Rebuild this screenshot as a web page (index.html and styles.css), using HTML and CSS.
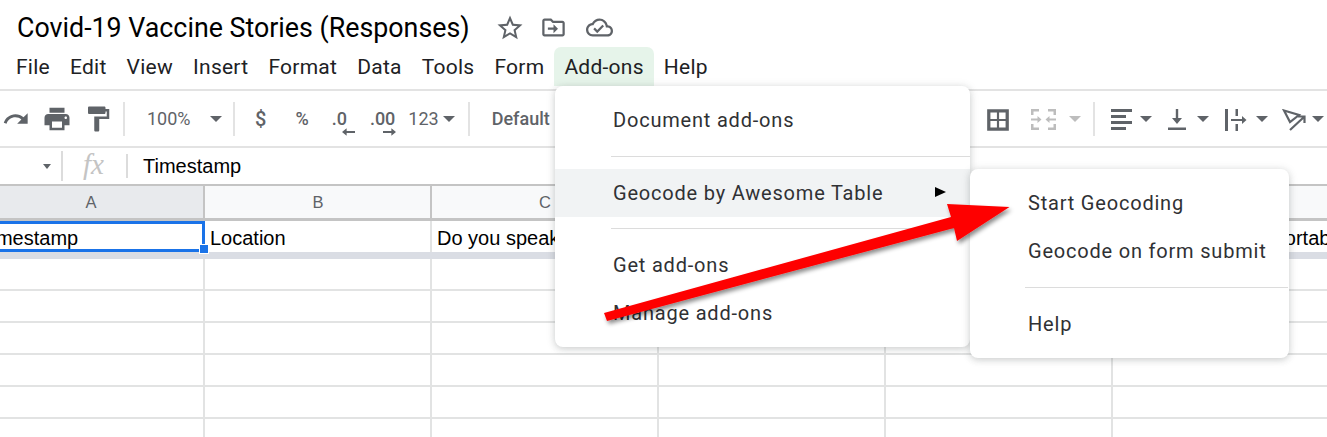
FILE: index.html
```html
<!DOCTYPE html>
<html lang="en">
<head>
<meta charset="utf-8">
<title>Covid-19 Vaccine Stories (Responses)</title>
<link rel="stylesheet" href="styles.css">
</head>
<body>
<div class="page">
  <header class="title-row">
    <h1 class="doc-title">Covid-19 Vaccine Stories (Responses)</h1>
    <svg class="t-icon star" viewBox="0 0 24 24"><path d="M22 9.24l-7.19-.62L12 2 9.19 8.63 2 9.24l5.46 4.73L5.82 21 12 17.27 18.18 21l-1.63-7.03L22 9.24zM12 15.4l-3.76 2.27 1-4.28-3.32-2.88 4.38-.38L12 6.1l1.71 4.04 4.38.38-3.32 2.88 1 4.28L12 15.4z"/></svg>
    <svg class="t-icon folder" viewBox="0 0 24 24"><path d="M20 6h-8l-2-2H4c-1.1 0-2 .9-2 2v12c0 1.1.9 2 2 2h16c1.1 0 2-.9 2-2V8c0-1.1-.9-2-2-2zm0 12H4V6h5.17l2 2H20v10zM7 12v2h5v3l4-4-4-4v3H7z"/></svg>
    <svg class="t-icon cloud" viewBox="0 0 24 24"><path d="M19.35 10.04C18.67 6.59 15.64 4 12 4 9.11 4 6.6 5.64 5.35 8.04 2.34 8.36 0 10.91 0 14c0 3.31 2.69 6 6 6h13c2.76 0 5-2.24 5-5 0-2.64-2.05-4.78-4.65-4.96zM19 18H6c-2.21 0-4-1.79-4-4 0-2.05 1.53-3.76 3.56-3.97l1.07-.11.5-.95C8.08 7.14 9.94 6 12 6c2.62 0 4.88 1.86 5.39 4.43l.3 1.5 1.53.11c1.56.1 2.78 1.41 2.78 2.96 0 1.65-1.35 3-3 3zm-9-3.82l-2.09-2.09L6.5 13.5 10 17l6.01-6.01-1.41-1.41z"/></svg>
  </header>

  <nav class="menubar">
    <span class="mi">File</span><span class="mi">Edit</span><span class="mi">View</span><span class="mi">Insert</span><span class="mi">Format</span><span class="mi">Data</span><span class="mi">Tools</span><span class="mi">Form</span><span class="mi active">Add-ons</span><span class="mi">Help</span>
  </nav>

  <div class="toolbar">
    <svg class="ic redo" viewBox="0 0 24 24"><path d="M18.4 10.6C16.55 8.99 14.15 8 11.5 8c-4.65 0-8.58 3.03-9.96 7.22L3.9 16c1.05-3.19 4.05-5.5 7.6-5.5 1.95 0 3.73.72 5.12 1.88L13 16h9V7l-3.6 3.6z"/></svg>
    <svg class="ic print" viewBox="0 0 24 24"><path d="M19 8H5c-1.66 0-3 1.34-3 3v6h4v4h12v-4h4v-6c0-1.66-1.34-3-3-3zm-3 11H8v-5h8v5zm3-7c-.55 0-1-.45-1-1s.45-1 1-1 1 .45 1 1-.45 1-1 1zm-1-9H6v4h12V3z"/></svg>
    <svg class="ic paint" viewBox="0 0 24 24"><path d="M18 4V3c0-.55-.45-1-1-1H5c-.55 0-1 .45-1 1v4c0 .55.45 1 1 1h12c.55 0 1-.45 1-1V6h1v4H9v11c0 .55.45 1 1 1h2c.55 0 1-.45 1-1v-9h8V4h-3z"/></svg>
    <i class="sep s1"></i>
    <span class="tt zoom">100%</span>
    <i class="caret c-zoom"></i>
    <i class="sep s2"></i>
    <span class="tt bold dollar">$</span>
    <span class="tt bold pct">%</span>
    <span class="tt bold dec0">.0<svg class="dec-arrow" viewBox="0 0 14 8"><path d="M14 3H5V0L0 4l5 4V5h9z"/></svg></span>
    <span class="tt bold dec00">.00<svg class="dec-arrow" viewBox="0 0 14 8"><path d="M0 3h9V0l5 4-5 4V5H0z"/></svg></span>
    <span class="tt n123">123</span>
    <i class="caret c-123"></i>
    <i class="sep s3"></i>
    <span class="tt bold font-name">Default</span>
    <span class="tb-spacer"></span>
    <svg class="ic borders" viewBox="0 0 24 24"><path d="M2 2v20h20V2H2zm9 17H5v-6h6v6zm0-8H5V5h6v6zm8 8h-6v-6h6v6zm0-8h-6V5h6v6z"/></svg>
    <svg class="ic merge" viewBox="0 0 25 21"><path d="M0 0h8v2.500H2.500V6H0zM17 0h8v6h-2.500V2.500H17zM0 15h2.500v3.500H8V21H0zM22.500 15H25v6h-8v-2.500h5.500zM0 9.500h6.500V7l4 3.500-4 3.500v-2.500H0zM25 9.500h-6.500V7l-4 3.500 4 3.500v-2.500H25z"/></svg>
    <i class="caret light c-merge"></i>
    <i class="sep s4"></i>
    <svg class="ic align" viewBox="0 0 21 21"><path d="M0 0h21v3H0zM0 6h15v3H0zM0 12h21v3H0zM0 18h15v3H0z"/></svg>
    <i class="caret c-align"></i>
    <svg class="ic valign" viewBox="0 0 20 21"><path d="M1 18.500h18V21H1zM8.800 0h2.400v9H15l-5 6-5-6h3.800z"/></svg>
    <i class="caret c-valign"></i>
    <svg class="ic wrap" viewBox="0 0 22 22"><path d="M0 0h3v22H0zM10.500 0h2.500v7h-2.500zM10.500 15h2.500v7h-2.500zM6 10h11V7l4.500 4-4.500 4v-3H6z"/></svg>
    <i class="caret c-wrap"></i>
    <svg class="ic rotate" viewBox="0 0 24 22"><path class="rot" d="M2 1.500L17 6 8 13zM8 21L22 8M16 7.500h6.500V14"/></svg>
    <i class="caret c-rotate"></i>
  </div>

  <div class="formula">
    <i class="caret small c-name"></i>
    <i class="fsep"></i>
    <span class="fx">fx</span>
    <i class="fsep second"></i>
    <span class="fval">Timestamp</span>
  </div>

  <div class="sheet">
    <div class="row head">
      <div class="cell sel">A</div><div class="cell">B</div><div class="cell">C</div><div class="cell">D</div><div class="cell">E</div><div class="cell">F</div>
    </div>
    <div class="row first">
      <div class="cell picked">Timestamp</div><div class="cell">Location</div><div class="cell">Do you speak English?</div><div class="cell"></div><div class="cell"></div><div class="cell clip">Would you be comfortable</div>
    </div>
    <div class="freeze"></div>
    <div class="row plain"><div class="cell"></div><div class="cell"></div><div class="cell"></div><div class="cell"></div><div class="cell"></div><div class="cell"></div></div>
    <div class="row plain"><div class="cell"></div><div class="cell"></div><div class="cell"></div><div class="cell"></div><div class="cell"></div><div class="cell"></div></div>
    <div class="row plain"><div class="cell"></div><div class="cell"></div><div class="cell"></div><div class="cell"></div><div class="cell"></div><div class="cell"></div></div>
    <div class="row plain"><div class="cell"></div><div class="cell"></div><div class="cell"></div><div class="cell"></div><div class="cell"></div><div class="cell"></div></div>
    <div class="row plain"><div class="cell"></div><div class="cell"></div><div class="cell"></div><div class="cell"></div><div class="cell"></div><div class="cell"></div></div>
    <div class="row plain"><div class="cell"></div><div class="cell"></div><div class="cell"></div><div class="cell"></div><div class="cell"></div><div class="cell"></div></div>
    <i class="handle"></i>
  </div>

  <div class="menu menu-main">
    <div class="item">Document add-ons</div>
    <div class="divider"></div>
    <div class="item hover">Geocode by Awesome Table<i class="sub-arrow"></i></div>
    <div class="divider tight"></div>
    <div class="item">Get add-ons</div>
    <div class="item">Manage add-ons</div>
  </div>

  <div class="menu menu-sub">
    <div class="item">Start Geocoding</div>
    <div class="item">Geocode on form submit</div>
    <div class="divider"></div>
    <div class="item">Help</div>
  </div>

  <svg class="annot" viewBox="0 0 1327 437">
    <defs>
      <filter id="sh" x="-5%" y="-20%" width="110%" height="140%">
        <feDropShadow dx="2" dy="3" stdDeviation="2" flood-color="#000" flood-opacity=".45"/>
      </filter>
    </defs>
    <polygon filter="url(#sh)" fill="#fe0000" points="604,313 951,217 947,204 1009.500,207 957,241 954,228 607,321"/>
  </svg>
</div>
</body>
</html>
```
FILE: styles.css
```css
* { box-sizing: border-box; }
html, body { margin: 0; padding: 0; background: #fff; }
.page { position: relative; width: 1327px; height: 437px; overflow: hidden; font-family: Roboto, "Liberation Sans", sans-serif; color: #202124; }

.title-row { height: 47px; display: flex; align-items: center; padding: 8px 0 0 17px; }
.doc-title { margin: 0; font-size: 26.800px; font-weight: 400; color: #000; width: 453px; white-space: nowrap; line-height: 34px; }
.t-icon { fill: #5f6368; flex: none; }
.star { width: 30px; height: 30px; margin-left: 25px; }
.folder { width: 27px; height: 27px; margin-left: 15px; }
.cloud { width: 27px; height: 27px; margin-left: 19px; }

.menubar { height: 44px; display: flex; align-items: flex-start; border-bottom: 2px solid #e3e3e3; padding-left: 6px; }
.mi { height: 39px; line-height: 40px; padding: 0 10px; font-size: 21px; color: #202124; letter-spacing: .26px; white-space: nowrap; }
.mi.active { background: #e6f4ea; border-radius: 7px 7px 0 0; }

.toolbar { height: 57px; display: flex; align-items: center; border-bottom: 2px solid #e3e3e3; color: #5f6368; position: relative; }
.ic { fill: #5f6368; flex: none; }
.redo { width: 28px; height: 28px; margin-left: 2px; }
.print { width: 30px; height: 30px; margin-left: 12px; }
.paint { width: 30px; height: 30px; margin-left: 11px; }
.sep { width: 2px; height: 34px; background: #e3e3e3; flex: none; }
.s1 { margin-left: 10px; }
.s2 { margin-left: 11px; }
.s3 { margin-left: 13px; }
.s4 { margin-left: 12px; }
.tt { font-size: 18px; color: #5f6368; flex: none; white-space: nowrap; position: relative; }
.bold { font-weight: 500; }
.zoom { margin-left: 22px; width: 45px; }
.caret { width: 0; height: 0; border-left: 6px solid transparent; border-right: 6px solid transparent; border-top: 6px solid #5f6368; flex: none; }
.caret.light { border-top-color: #bdbdbd; }
.c-zoom { margin-left: 18px; }
.dollar { margin-left: 20px; font-size: 20px; }
.pct { margin-left: 29px; }
.dec0 { margin-left: 23px; }
.dec00 { margin-left: 23px; }
.dec-arrow { position: absolute; top: 20px; width: 13px; height: 8px; fill: #5f6368; }
.dec0 .dec-arrow { right: -8px; }
.dec00 .dec-arrow { right: -1px; }
.n123 { margin-left: 13px; font-size: 18px; }
.c-123 { margin-left: 4px; }
.font-name { margin-left: 22px; }
.tb-spacer { flex: 1; }
.borders { width: 26px; height: 26px; margin-top: 2px; }
.merge { width: 25px; height: 21px; margin-left: 20px; margin-top: 2px; fill: #bdbdbd; }
.c-merge { margin-left: 13px; }
.align { width: 21px; height: 21px; margin-left: 16px; margin-top: 2px; }
.c-align { margin-left: 8px; }
.valign { width: 20px; height: 21px; margin-left: 15px; margin-top: 2px; }
.c-valign { margin-left: 10px; }
.wrap { width: 22px; height: 22px; margin-left: 16px; margin-top: 2px; }
.c-wrap { margin-left: 9px; }
.rotate { width: 24px; height: 22px; margin-left: 14px; margin-top: 2px; }
.rot { fill: none; stroke: #5f6368; stroke-width: 2.200; }
.c-rotate { margin-left: 6px; margin-right: 3px; }

.formula { height: 36px; display: flex; align-items: center; }
.c-name { margin-left: 43px; }
.caret.small { border-left-width: 4.500px; border-right-width: 4.500px; border-top-width: 5px; }
.fsep { width: 2px; height: 30px; background: #dcdcdc; flex: none; margin-left: 10px; }
.fsep.second { margin-left: 0; height: 24px; }
.fx { font-family: "Liberation Serif", serif; font-style: italic; font-size: 29px; color: #c4c4c4; width: 63px; padding-left: 20px; margin-top: -4px; }
.fval { font-family: "Liberation Sans", Arial, sans-serif; font-size: 20px; color: #000; margin-left: 15px; }

.sheet { margin-left: -22px; width: 1400px; position: relative; font-family: "Liberation Sans", Arial, sans-serif; }
.row { display: grid; grid-template-columns: repeat(6, 227px); }
.cell { border-right: 2px solid #e2e3e3; border-bottom: 2px solid #e2e3e3; height: 32px; font-size: 20px; line-height: 30px; padding-left: 5px; white-space: nowrap; overflow: hidden; color: #000; }
.head { border-top: 2px solid #c4c4c4; }
.head .cell { height: 35px; background: #f8f9fa; border-right-color: #c4c4c4; border-bottom: 3px solid #c4c4c4; color: #5f6368; font-size: 16.500px; line-height: 33px; text-align: center; padding: 0 0 0 1px; }
.head .cell.sel { background: #e8eaed; }
.first .cell { border-bottom: 0; height: 31px; line-height: 35px; }
.first .cell.picked { outline: 3px solid #1a73e8; outline-offset: -3px; padding-left: 2px; }
.first .cell.clip { padding-left: 1px; }
.freeze { height: 7px; background: #dadde4; }
.plain .cell { height: 32px; }
.handle { position: absolute; left: 221px; top: 60px; width: 10px; height: 10px; background: #1a73e8; border: 1px solid #fff; }

.menu { position: absolute; background: #fff; border-radius: 8px; padding: 10px 0; box-shadow: 0 2px 6px rgba(60,64,67,.15), 0 1px 10px rgba(60,64,67,.15); font-size: 20px; letter-spacing: .8px; color: #303134; }
.menu-main { left: 555px; top: 86px; width: 415px; height: 261px; }
.menu-sub { left: 970px; top: 169px; width: 319px; height: 189px; }
.item { height: 48px; line-height: 48px; white-space: nowrap; position: relative; }
.menu-main .item { padding-left: 58px; }
.menu-sub .item { padding-left: 58px; }
.item.hover { background: #f1f3f4; }
.sub-arrow { position: absolute; left: 380px; top: 18px; width: 0; height: 0; border-left: 11px solid #000; border-top: 5px solid transparent; border-bottom: 5px solid transparent; }
.divider { height: 1px; background: #dcdcdc; }
.menu-main .divider { margin: 12px 0 12px 56px; }
.menu-main .divider.tight { margin-top: 11px; }
.menu-sub .divider { margin: 12px 1px 12px 55px; }

.annot { position: absolute; left: 0; top: 0; width: 1327px; height: 437px; pointer-events: none; }
```
